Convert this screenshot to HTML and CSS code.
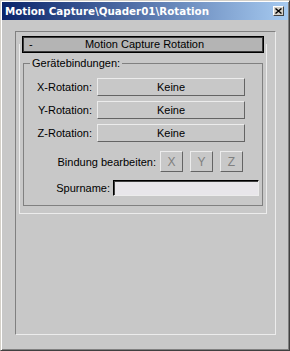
FILE: index.html
```html
<!DOCTYPE html>
<html lang="de">
<head>
    <meta charset="UTF-8">
    <title>Motion Capture\Quader01\Rotation</title>
    <link rel="stylesheet" href="styles.css">
</head>
<body>
    <div class="window">
        <div class="titlebar">
            <span class="title">Motion Capture\Quader01\Rotation</span>
            <span class="close">
                <svg width="7" height="6" viewBox="0 0 7 6"><path d="M0.5 0.5 L6.5 5.5 M6.5 0.5 L0.5 5.5" stroke="#000" stroke-width="1.4" fill="none"/></svg>
            </span>
        </div>
        <div class="panel">
            <div class="rollout">
                <div class="rollout-head">
                    <span class="minus">-</span>
                    <span class="rollout-title">Motion Capture Rotation</span>
                </div>
                <div class="rollout-frame">
                    <fieldset class="group">
                        <legend>Gerätebindungen:</legend>
                        <div class="row axis-row">
                            <label>X-Rotation:</label>
                            <button class="btn wide-btn">Keine</button>
                        </div>
                        <div class="row axis-row">
                            <label>Y-Rotation:</label>
                            <button class="btn wide-btn">Keine</button>
                        </div>
                        <div class="row axis-row">
                            <label>Z-Rotation:</label>
                            <button class="btn wide-btn">Keine</button>
                        </div>
                        <div class="row bind-row">
                            <label>Bindung bearbeiten:</label>
                            <button class="btn small-btn" disabled>X</button>
                            <button class="btn small-btn" disabled>Y</button>
                            <button class="btn small-btn" disabled>Z</button>
                        </div>
                        <div class="row name-row">
                            <label for="trackName">Spurname:</label>
                            <input type="text" id="trackName" class="field">
                        </div>
                    </fieldset>
                </div>
            </div>
        </div>
    </div>
</body>
</html>
```

FILE: styles.css
```css
html, body {
    margin: 0;
    padding: 0;
    background: #c8c8c8;
}
body {
    font-family: 'Liberation Sans', Arial, sans-serif;
    font-size: 11px;
    color: #000;
}
.window {
    width: 290px;
    height: 351px;
    box-sizing: border-box;
    padding: 1px;
    border: 1px solid;
    border-color: #d4d0c8 #404040 #404040 #d4d0c8;
    box-shadow: inset 1px 1px #fff, inset -1px -1px #808080;
    background: #c8c8c8;
}
.titlebar {
    height: 18px;
    display: flex;
    align-items: center;
    justify-content: space-between;
    background: linear-gradient(to right, #0a246a, #a6caf0);
    padding: 0 4px 0 3px;
}
.title {
    font-family: 'DejaVu Sans', sans-serif;
    font-weight: bold;
    font-size: 10.3px;
    line-height: 18px;
    color: #fff;
    white-space: nowrap;
}
.close {
    width: 11px;
    height: 10px;
    box-sizing: border-box;
    display: flex;
    align-items: center;
    justify-content: center;
    background: #d4d0c8;
    border: 1px solid;
    border-color: #fff #404040 #404040 #fff;
}
.panel {
    margin: 11px 0 0 13px;
    width: 261px;
    height: 304px;
    box-sizing: border-box;
    border: 1px solid;
    border-color: #808080 #ececec #ececec #808080;
    padding: 4px 0 0 3px;
}
.rollout {
    width: 248px;
}
.rollout-head {
    margin: 0 3px;
    height: 17px;
    box-sizing: border-box;
    border: 1px solid #000;
    box-shadow: inset 1px 1px #3a3a3a, inset -1px -1px #3a3a3a;
    background: #b4b4b4;
    display: grid;
    align-items: center;
    line-height: 15px;
}
.minus,
.rollout-title {
    grid-area: 1 / 1;
}
.minus {
    justify-self: start;
    padding-left: 6px;
}
.rollout-title {
    justify-self: center;
    padding-left: 3px;
}
.rollout-frame {
    margin-top: -9px;
    padding-top: 13px;
    border: 1px solid #ececec;
    border-top: none;
}
.group {
    margin: 0 3px 7px 3px;
    padding: 8px 0 9px 0;
    border: 1px solid #808080;
}
.group legend {
    margin-left: 6px;
    padding: 0 2px;
    line-height: 13px;
}
.row {
    display: flex;
    justify-content: flex-end;
    align-items: center;
}
.row label {
    white-space: nowrap;
}
.axis-row {
    padding-right: 17px;
    margin-bottom: 5px;
}
.axis-row label {
    margin-right: 5px;
}
.bind-row {
    margin-top: 9px;
    padding-right: 19px;
}
.bind-row label {
    margin-right: 4px;
}
.name-row {
    margin-top: 8px;
    padding-right: 3px;
}
.name-row label {
    margin-right: 3px;
}
.btn {
    font-family: 'Liberation Sans', Arial, sans-serif;
    font-size: 11px;
    color: #000;
    background: #c8c8c8;
    border: 1px solid;
    border-color: #ececec #646464 #646464 #ececec;
    padding: 0;
    margin: 0;
}
.wide-btn {
    width: 148px;
    height: 18px;
}
.small-btn {
    width: 23px;
    height: 21px;
    margin-left: 7px;
    color: #808080;
    font-size: 12px;
}
.small-btn:first-of-type {
    margin-left: 0;
}
.field {
    width: 146px;
    height: 16px;
    box-sizing: border-box;
    margin: 0;
    padding: 0 2px;
    border: 1px solid;
    border-color: #000 #ececec #ececec #000;
    box-shadow: inset 1px 1px #404040;
    background: #e8e6ea;
    font-family: 'Liberation Sans', Arial, sans-serif;
    font-size: 11px;
}
```
